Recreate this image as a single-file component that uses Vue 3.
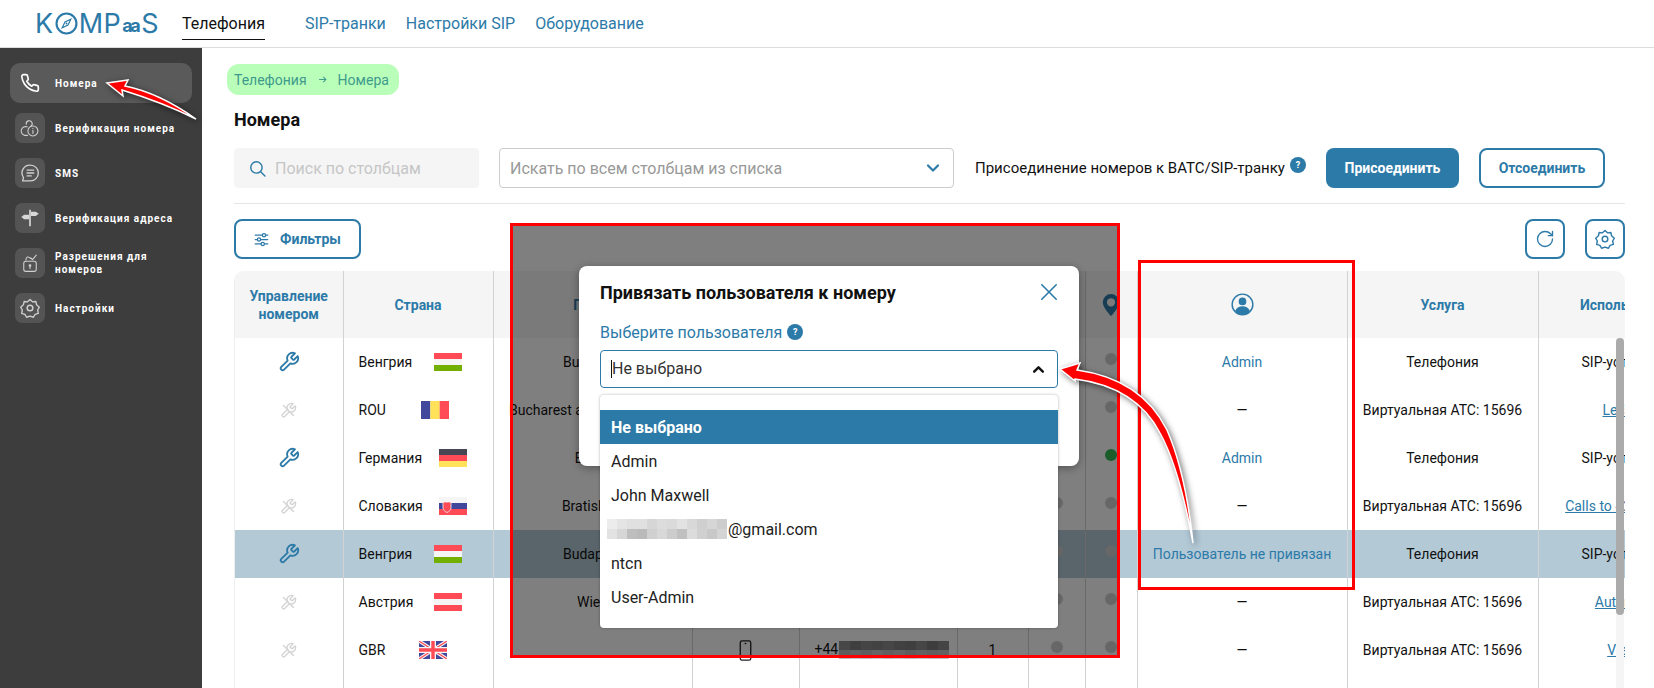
<template>
  <div class="page">
    <!-- Top bar -->
    <header class="topbar">
      <div class="logo">
        <span>K</span>
        <svg class="logo__o" viewBox="0 0 24 24" fill="none" stroke="currentColor">
          <circle cx="12" cy="12" r="10.4" stroke-width="2.2" />
          <path d="M16.5 7.5 13.6 13.6 7.5 16.5 10.4 10.4Z" stroke-width="1.2" />
          <circle cx="12" cy="12" r="1" fill="currentColor" stroke="none" />
        </svg>
        <span>MP</span>
        <span class="logo__aa">aa</span>
        <span>S</span>
      </div>
      <nav class="topnav">
        <a class="topnav__link topnav__link--active">Телефония</a>
        <a class="topnav__link">SIP-транки</a>
        <a class="topnav__link">Настройки SIP</a>
        <a class="topnav__link">Оборудование</a>
      </nav>
    </header>

    <div class="body">
      <!-- Sidebar -->
      <aside class="sidebar">
        <div v-for="(item, i) in sideItems" :key="item.label" class="side-item" :class="{ 'side-item--active': i === 0 }">
          <span class="side-item__icon">
            <svg v-if="item.icon === 'phone'" viewBox="0 0 24 24" fill="none" stroke="#fff" stroke-width="2" stroke-linejoin="round" stroke-linecap="round">
              <path d="M22 16.92v3a2 2 0 0 1-2.18 2 19.79 19.79 0 0 1-8.63-3.07 19.5 19.5 0 0 1-6-6 19.79 19.79 0 0 1-3.07-8.67A2 2 0 0 1 4.11 2h3a2 2 0 0 1 2 1.72 12.84 12.84 0 0 0 .7 2.81 2 2 0 0 1-.45 2.11L8.09 9.91a16 16 0 0 0 6 6l1.27-1.27a2 2 0 0 1 2.11-.45 12.84 12.84 0 0 0 2.81.7A2 2 0 0 1 22 16.92z" />
            </svg>
            <svg v-else-if="item.icon === 'verify'" viewBox="0 0 24 24" fill="none" stroke="#cfcfcf" stroke-width="1.3" stroke-linecap="round">
              <path d="M7.5 7.5a3.6 3.6 0 1 1 5.2 2.6" />
              <path d="M8.5 10.6a5.2 5.2 0 0 0-3.4 10.2h4" />
              <circle cx="15.5" cy="15.5" r="6" />
              <path d="M15.5 14.6v4M15.5 12.4v.2" />
            </svg>
            <svg v-else-if="item.icon === 'sms'" viewBox="0 0 24 24" fill="none" stroke="#cfcfcf" stroke-width="1.6" stroke-linecap="round" stroke-linejoin="round">
              <path d="M12.5 2.5a9.5 9.5 0 0 1 0 19H3.2l1-4a9.5 9.5 0 0 1 8.3-15Z" />
              <path d="M8.5 8.5h8M8.5 12h8M8.5 15.5h5" />
            </svg>
            <svg v-else-if="item.icon === 'sign'" viewBox="0 0 24 24" fill="#d8d8d8">
              <path d="M11 2h2v20h-2z" />
              <path d="M13 4.5h6l3.5 2.5-3.5 2.5h-6z" />
              <path d="M11 8h-6l-3.5 2.7 3.5 2.8h6z" />
            </svg>
            <svg v-else-if="item.icon === 'lock'" viewBox="0 0 24 24" fill="none" stroke="#cfcfcf" stroke-width="1.3" stroke-linecap="round" stroke-linejoin="round">
              <rect x="4.5" y="10" width="15" height="12" rx="2.5" />
              <path d="M7 8.5C7.5 4.5 10 3.5 12.5 6.5M13 6l2 2 4.5-5.5" />
              <circle cx="12" cy="15" r="1" fill="#cfcfcf" />
              <path d="M12 15.5v3" />
            </svg>
            <svg v-else viewBox="0 0 24 24" fill="none" stroke="#cfcfcf" stroke-width="1.6" stroke-linejoin="round">
              <path d="M12 1.8 15 4.6l4-.4.9 4 3.3 2.8-2 3.4.8 4-3.9 1.2-2 3.5-4.1-1.4-4.1 1.4-2-3.5-3.9-1.2.8-4-2-3.4 3.3-2.8.9-4 4 .4Z" />
              <circle cx="12" cy="12" r="3.4" stroke-width="1.8" />
            </svg>
          </span>
          <span class="side-item__label">{{ item.label }}</span>
        </div>
      </aside>

      <!-- Content -->
      <main class="main">
        <div class="crumbs">
          <span>Телефония</span>
          <svg class="crumbs__arrow" viewBox="0 0 12 12" fill="none" stroke="currentColor" stroke-width="1.4">
            <path d="M1.5 6h9M7 2.5 10.5 6 7 9.5" />
          </svg>
          <span>Номера</span>
        </div>
        <h1 class="title">Номера</h1>

        <div class="toolbar">
          <div class="search">
            <svg class="search__icon" viewBox="0 0 24 24" fill="none" stroke="#2c7aa8" stroke-width="2" stroke-linecap="round">
              <circle cx="10.5" cy="10.5" r="8" />
              <path d="m16.5 16.5 6 6" />
            </svg>
            <span>Поиск по столбцам</span>
          </div>
          <div class="column-select">
            <span>Искать по всем столбцам из списка</span>
            <svg class="column-select__chevron" viewBox="0 0 16 16" fill="none" stroke="#2c7aa8" stroke-width="2.2" stroke-linecap="round" stroke-linejoin="round">
              <path d="m3 5.5 5 5 5-5" />
            </svg>
          </div>
          <span class="toolbar__text">Присоединение номеров к ВАТС/SIP-транку</span>
          <span class="help help--raised">?</span>
          <button type="button" class="btn btn--primary">Присоединить</button>
          <button type="button" class="btn btn--outline">Отсоединить</button>
        </div>

        <div class="actions">
          <button type="button" class="btn-filter">
            <svg viewBox="0 0 24 24" fill="none" stroke="currentColor" stroke-width="2" stroke-linecap="round">
              <path d="M2 5h11M19 5h3M2 12h3M11 12h11M2 19h9M17 19h5" />
              <circle cx="16" cy="5" r="2.6" />
              <circle cx="8" cy="12" r="2.6" />
              <circle cx="14" cy="19" r="2.6" />
            </svg>
            Фильтры
          </button>
          <div class="actions__right">
            <button type="button" class="icon-btn" aria-label="Обновить">
              <svg viewBox="0 0 24 24" fill="none" stroke="currentColor" stroke-width="1.6" stroke-linecap="round" stroke-linejoin="round">
                <path d="M21 12a9 9 0 1 1-9-9c2.52 0 4.93 1 6.74 2.74L21 8" />
                <path d="M21 3v5h-5" />
              </svg>
            </button>
            <button type="button" class="icon-btn" aria-label="Настройки">
              <svg viewBox="0 0 24 24" fill="none" stroke="currentColor" stroke-width="1.7" stroke-linejoin="round">
                <path d="M12 1.8 15 4.6l4-.4.9 4 3.3 2.8-2 3.4.8 4-3.9 1.2-2 3.5-4.1-1.4-4.1 1.4-2-3.5-3.9-1.2.8-4-2-3.4 3.3-2.8.9-4 4 .4Z" />
                <circle cx="12" cy="12" r="3.4" />
              </svg>
            </button>
          </div>
        </div>

        <div class="table-wrap">
          <table class="grid">
            <colgroup>
              <col v-for="w in colWidths" :key="w.id" :style="{ width: w.px + 'px' }" />
            </colgroup>
            <thead>
              <tr>
                <th>Управление номером</th>
                <th>Страна</th>
                <th>Город</th>
                <th>Тип</th>
                <th>Номер</th>
                <th></th>
                <th></th>
                <th>
                  <svg class="pin" viewBox="0 0 24 24">
                    <path fill="#2c7aa8" fill-rule="evenodd" d="M12 0a9 9 0 0 0-9 9c0 6 9 15 9 15s9-9 9-15a9 9 0 0 0-9-9Zm0 4.5a4.5 4.5 0 1 1 0 9 4.5 4.5 0 0 1 0-9Z" />
                  </svg>
                </th>
                <th>
                  <svg class="user-icon" viewBox="0 0 24 24">
                    <circle cx="12" cy="12" r="10.8" fill="none" stroke="#2c7aa8" stroke-width="1.5" />
                    <circle cx="12" cy="8.8" r="4" fill="#2c7aa8" />
                    <path fill="#2c7aa8" d="M4.2 19c1.2-3.6 4.2-5.2 7.8-5.2s6.600 1.600 7.800 5.200A10.600 10.600 0 0 1 12 22.600 10.600 10.600 0 0 1 4.200 19Z" />
                  </svg>
                </th>
                <th>Услуга</th>
                <th>Использование</th>
              </tr>
            </thead>
            <tbody>
              <tr v-for="row in rows" :key="row.id" :class="{ 'row--selected': row.selected }">
                <td>
                  <svg class="wrench" :class="{ 'wrench--off': !row.manage }" viewBox="0 0 24 24" fill="none" stroke-linecap="round" stroke-linejoin="round">
                    <path d="M14.7 6.3a1 1 0 0 0 0 1.4l1.6 1.6a1 1 0 0 0 1.400 0l3.770-3.770a6 6 0 0 1-7.940 7.940l-6.910 6.910a2.120 2.120 0 0 1-3-3l6.910-6.910a6 6 0 0 1 7.940-7.940l-3.760 3.760z" />
                    <path v-if="!row.manage" d="M5 5l14 14" />
                  </svg>
                </td>
                <td class="cell-country">
                  <span>{{ row.country }}</span>
                  <svg class="flag" :style="{ marginLeft: row.flagGap + 'px' }" viewBox="0 0 28 18">
                    <template v-if="row.flag === 'gb'">
                      <rect width="28" height="18" fill="#41479b" />
                      <path d="M0 0 28 18M28 0 0 18" stroke="#f5f5f5" stroke-width="3.500" />
                      <path d="M0 0 28 18M28 0 0 18" stroke="#ff4b55" stroke-width="1.200" />
                      <path d="M14 0v18M0 9h28" stroke="#f5f5f5" stroke-width="6" />
                      <path d="M14 0v18M0 9h28" stroke="#ff4b55" stroke-width="3.400" />
                    </template>
                    <template v-else>
                      <rect
                        v-for="(color, s) in flags[row.flag].colors"
                        :key="s"
                        :x="flags[row.flag].vertical ? (s * 28) / 3 : 0"
                        :y="flags[row.flag].vertical ? 0 : s * 6"
                        :width="flags[row.flag].vertical ? 28 / 3 : 28"
                        :height="flags[row.flag].vertical ? 18 : 6"
                        :fill="color"
                      />
                      <path v-if="row.flag === 'sk'" d="M4 5h8v6c0 2-2 3.500-4 4.500-2-1-4-2.500-4-4.500Z" fill="#ff4b55" stroke="#f5f5f5" stroke-width="0.800" />
                    </template>
                  </svg>
                </td>
                <td class="cell-center">{{ row.city }}</td>
                <td class="cell-center">
                  <svg v-if="row.device" class="device" viewBox="0 0 16 24" fill="none" stroke="#222" stroke-width="1.500">
                    <rect x="2" y="1" width="12" height="22" rx="2" />
                    <path d="M7 4h2" />
                  </svg>
                </td>
                <td class="cell-number">
                  <template v-if="row.device">
                    <span>+44</span>
                    <span class="mosaic mosaic--number">
                      <i v-for="(c, m) in numberMosaic" :key="m" :style="{ background: c }"></i>
                    </span>
                  </template>
                </td>
                <td class="cell-center">{{ row.device ? '1' : '' }}</td>
                <td class="cell-center"><span class="dot"></span></td>
                <td class="cell-center"><span class="dot" :class="{ 'dot--on': row.online }"></span></td>
                <td class="cell-center" :class="{ 'cell-link': row.user !== '—' }">{{ row.user }}</td>
                <td class="cell-center">{{ row.service }}</td>
                <td class="cell-center">
                  <a v-if="row.usageLink" class="usage-link">{{ row.usage }}</a>
                  <template v-else>{{ row.usage }}</template>
                </td>
              </tr>
              <tr class="row--filler">
                <td v-for="w in colWidths" :key="w.id"></td>
              </tr>
            </tbody>
          </table>
          <div class="scrollbar"><div class="scrollbar__thumb"></div></div>
        </div>
      </main>
    </div>

    <!-- Dimmed part with the dialog, framed in the annotation -->
    <div class="dim">
      <div class="modal">
        <div class="modal__head">
          <span class="modal__title">Привязать пользователя к номеру</span>
          <svg class="modal__close" viewBox="0 0 20 20" fill="none" stroke="#2c7aa8" stroke-width="1.800" stroke-linecap="round">
            <path d="M2 2l16 16M18 2 2 18" />
          </svg>
        </div>
        <div class="modal__label">
          <span>Выберите пользователя</span>
          <span class="help">?</span>
        </div>
        <div class="user-select">
          <span class="user-select__value">Не выбрано</span>
          <svg class="user-select__chevron" viewBox="0 0 12 12" fill="none" stroke="#111" stroke-width="2.200" stroke-linecap="round" stroke-linejoin="round">
            <path d="m2 8 4-4 4 4" />
          </svg>
        </div>
        <ul class="options">
          <li class="options__item options__item--selected">Не выбрано</li>
          <li class="options__item">Admin</li>
          <li class="options__item">John Maxwell</li>
          <li class="options__item options__item--mail">
            <span class="mosaic mosaic--mail">
              <i v-for="(c, m) in mailMosaic" :key="m" :style="{ background: c }"></i>
            </span>
            <span>@gmail.com</span>
          </li>
          <li class="options__item">ntcn</li>
          <li class="options__item">User-Admin</li>
        </ul>
      </div>
    </div>

    <div class="user-frame"></div>

    <!-- Hand-drawn annotation arrows -->
    <svg class="arrows" viewBox="0 0 1654 688">
      <path
        class="arrow"
        d="M107 83 128 80 125 86C150 91 172 102 196 119 170 106 148 98 122 90L123 96Z"
      />
      <path
        class="arrow"
        d="M1060 369 1080 363 1077 370C1120 376 1150 396 1167 430 1181 462 1189 505 1193 543 1186 505 1176 462 1160 433 1143 400 1114 384 1075 379L1075 381Z"
      />
    </svg>
  </div>
</template>

<script setup>
const sideItems = [
  { label: 'Номера', icon: 'phone' },
  { label: 'Верификация номера', icon: 'verify' },
  { label: 'SMS', icon: 'sms' },
  { label: 'Верификация адреса', icon: 'sign' },
  { label: 'Разрешения для номеров', icon: 'lock' },
  { label: 'Настройки', icon: 'gear' }
]

const colWidths = [108, 150, 199, 107, 158, 71, 57, 52, 210, 191, 186].map((px, id) => ({ id, px }))

const flags = {
  hu: { colors: ['#ff4b55', '#f5f5f5', '#73af00'] },
  ro: { colors: ['#41479b', '#ffe15a', '#ff4b55'], vertical: true },
  de: { colors: ['#464655', '#ff4b55', '#ffe15a'] },
  sk: { colors: ['#f5f5f5', '#41479b', '#ff4b55'] },
  at: { colors: ['#ff4b55', '#f5f5f5', '#ff4b55'] }
}

const VATS = 'Виртуальная АТС: 15696'

const rows = [
  { id: 1, manage: true, country: 'Венгрия', flag: 'hu', flagGap: 22, city: 'Budapest', user: 'Admin', service: 'Телефония', usage: 'SIP-устройство' },
  { id: 2, manage: false, country: 'ROU', flag: 'ro', flagGap: 35, city: 'Bucharest and Ilfov County', user: '—', service: VATS, usage: "Let's Talk", usageLink: true },
  { id: 3, manage: true, country: 'Германия', flag: 'de', flagGap: 17, city: 'Berlin', online: true, user: 'Admin', service: 'Телефония', usage: 'SIP-устройство' },
  { id: 4, manage: false, country: 'Словакия', flag: 'sk', flagGap: 16, city: 'Bratislava', user: '—', service: VATS, usage: 'Calls to 421 numbers', usageLink: true },
  { id: 5, manage: true, country: 'Венгрия', flag: 'hu', flagGap: 22, city: 'Budapest', selected: true, user: 'Пользователь не привязан', service: 'Телефония', usage: 'SIP-устройство' },
  { id: 6, manage: false, country: 'Австрия', flag: 'at', flagGap: 21, city: 'Wien', user: '—', service: VATS, usage: 'Automation', usageLink: true },
  { id: 7, manage: false, country: 'GBR', flag: 'gb', flagGap: 34, city: '', device: true, user: '—', service: VATS, usage: 'View all', usageLink: true }
]

const numberMosaic = [
  '#8f8f8f', '#7f7f7f', '#8a8a8a', '#858585', '#8c8c8c', '#828282', '#7f7f7f', '#8c8c8c', '#7a7a7a', '#8a8a8a',
  '#b9b9b9', '#c4c4c4', '#bdbdbd', '#c8c8c8', '#bebebe', '#c6c6c6', '#bbbbbb', '#c4c4c4', '#bcbcbc', '#c0c0c0'
]

const mailMosaic = [
  '#ececec', '#e4e4e4', '#e0e0e0', '#e0e0e0', '#d6d6d6', '#dcdcdc', '#dadada', '#e2e2e2', '#d8d8d8', '#cfcfcf', '#d6d6d6', '#cdcdcd',
  '#e2e2e2', '#d6d6d6', '#bebebe', '#bababa', '#d0d0d0', '#d8d8d8', '#cccccc', '#c0c0c0', '#dcdcdc', '#d0d0d0', '#c8c8c8', '#d4d4d4'
]
</script>

<style scoped>
.page {
  position: relative;
  width: 1654px;
  height: 688px;
  overflow: hidden;
  display: flex;
  flex-direction: column;
  background: #fff;
  color: #111;
  font-family: Roboto, 'Liberation Sans', sans-serif;
  font-size: 14px;
}

/* Top bar */
.topbar {
  height: 48px;
  flex-shrink: 0;
  display: flex;
  align-items: center;
  box-sizing: border-box;
  border-bottom: 1px solid #ddd;
  padding-left: 35px;
}

.logo {
  width: 147px;
  display: flex;
  align-items: center;
  color: #2c7aa8;
  font-family: Inter, sans-serif;
  font-size: 27px;
  line-height: 1;
  letter-spacing: 0.5px;
  margin-top: -1px;
}

.logo__o {
  width: 23px;
  height: 23px;
  margin: 0 1px 0 1px;
}

.logo__aa {
  font-size: 18px;
  font-weight: 700;
  letter-spacing: -2.5px;
  margin: 6px 3px 0 1px;
}

.topnav {
  display: flex;
  gap: 20px;
}

.topnav__link {
  color: #2c7aa8;
  font-size: 16px;
  line-height: 30px;
  margin-top: 1px;
}

.topnav__link--active {
  color: #111;
  margin-right: 20px;
  border-bottom: 1px solid #111;
}

.body {
  flex: 1;
  display: flex;
  min-height: 0;
}

/* Sidebar */
.sidebar {
  width: 202px;
  flex-shrink: 0;
  box-sizing: border-box;
  padding-top: 15px;
  background: #3d3d3d;
}

.side-item {
  height: 40px;
  box-sizing: border-box;
  margin: 0 10px 5px;
  padding: 5px;
  border-radius: 10px;
  display: flex;
  align-items: center;
  gap: 10px;
}

.side-item--active {
  background: #5a5a5a;
}

.side-item__icon {
  width: 30px;
  height: 30px;
  flex-shrink: 0;
  display: flex;
  align-items: center;
  justify-content: center;
  border-radius: 7px;
  background: #545454;
}

.side-item--active .side-item__icon {
  background: transparent;
}

.side-item__icon svg {
  width: 20px;
  height: 20px;
}

.side-item__label {
  color: #fff;
  font-size: 10px;
  font-weight: 700;
  letter-spacing: 1px;
  line-height: 13px;
}

/* Main */
.main {
  flex: 1;
  min-width: 0;
  box-sizing: border-box;
  padding: 16px 29px 0 32px;
  display: flex;
  flex-direction: column;
}

.crumbs {
  align-self: flex-start;
  height: 31px;
  margin-left: -7px;
  padding: 0 10px 0 7px;
  display: flex;
  align-items: center;
  gap: 11px;
  border-radius: 12px;
  background: #b9ffb9;
  color: #3f9a8c;
}

.crumbs__arrow {
  width: 9px;
  height: 9px;
}

.title {
  margin: 15px 0 0;
  font-size: 18px;
  font-weight: 700;
  line-height: 20px;
  color: #111;
}

.toolbar {
  margin-top: 18px;
  display: flex;
  align-items: center;
  height: 40px;
  padding-bottom: 15px;
  box-sizing: content-box;
  border-bottom: 1px solid #e6e6e6;
}

.search {
  width: 245px;
  height: 40px;
  box-sizing: border-box;
  flex-shrink: 0;
  display: flex;
  align-items: center;
  gap: 9px;
  padding-left: 15px;
  border-radius: 4px;
  background: #f5f5f5;
  color: #c6c6c6;
  font-size: 16px;
}

.search__icon {
  width: 17px;
  height: 17px;
}

.column-select {
  width: 455px;
  height: 40px;
  margin-left: 20px;
  box-sizing: border-box;
  flex-shrink: 0;
  display: flex;
  align-items: center;
  justify-content: space-between;
  padding: 0 12px 0 10px;
  border: 1px solid #ccc;
  border-radius: 4px;
  color: #999;
  font-size: 16px;
}

.column-select__chevron {
  width: 16px;
  height: 16px;
}

.toolbar__text {
  margin-left: 21px;
  font-size: 15px;
  white-space: nowrap;
}

.help {
  width: 16px;
  height: 16px;
  border-radius: 50%;
  display: inline-flex;
  align-items: center;
  justify-content: center;
  background: #2c7aa8;
  color: #fff;
  font-size: 9px;
  font-weight: 700;
}

.help--raised {
  margin: -6px 0 0 5px;
}

.btn {
  height: 40px;
  box-sizing: border-box;
  border-radius: 8px;
  font-family: inherit;
  font-size: 14px;
  font-weight: 700;
}

.btn--primary {
  width: 133px;
  margin-left: 20px;
  border: 0;
  background: #2c7aa8;
  color: #fff;
}

.btn--outline {
  width: 126px;
  margin-left: 20px;
  border: 2px solid #2c7aa8;
  background: #fff;
  color: #2c7aa8;
}

.actions {
  margin-top: 15px;
  height: 40px;
  flex-shrink: 0;
  display: flex;
  justify-content: space-between;
}

.btn-filter {
  width: 127px;
  height: 40px;
  box-sizing: border-box;
  display: flex;
  align-items: center;
  justify-content: center;
  gap: 11px;
  border: 2px solid #2c7aa8;
  border-radius: 8px;
  background: #fff;
  color: #2c7aa8;
  font-family: inherit;
  font-size: 14px;
  font-weight: 700;
}

.btn-filter svg {
  width: 15px;
  height: 15px;
}

.actions__right {
  display: flex;
  gap: 20px;
}

.icon-btn {
  width: 40px;
  height: 40px;
  padding: 0;
  box-sizing: border-box;
  display: flex;
  align-items: center;
  justify-content: center;
  border: 2px solid #2c7aa8;
  border-radius: 8px;
  background: #fff;
  color: #2c7aa8;
}

.icon-btn svg {
  width: 20px;
  height: 20px;
}

/* Table */
.table-wrap {
  position: relative;
  margin-top: 12px;
  flex: 1;
  min-height: 0;
  overflow: hidden;
  border-radius: 10px 10px 0 0;
  border-left: 1px solid #eee;
}

.grid {
  width: 1489px;
  table-layout: fixed;
  border-collapse: collapse;
}

.grid th {
  height: 67px;
  padding: 0 8px;
  background: #f5f5f5;
  color: #2c7aa8;
  font-size: 14px;
  font-weight: 700;
  line-height: 18px;
  text-align: center;
  white-space: normal;
  border-right: 1px solid #d2d2d2;
}

.grid td {
  height: 48px;
  padding: 0;
  border-right: 1px solid #d2d2d2;
  text-align: center;
  white-space: nowrap;
  overflow: visible;
}

.grid th:last-child,
.grid td:last-child {
  border-right: 0;
}

.row--selected td {
  background: #b3c9d6;
}

.row--filler td {
  height: 20px;
}

.pin {
  width: 22px;
  height: 22px;
  display: block;
  margin: 0 auto;
}

.user-icon {
  width: 23px;
  height: 23px;
  display: block;
  margin: 0 auto;
}

.wrench {
  width: 22px;
  height: 22px;
  vertical-align: middle;
  stroke: #2c7aa8;
  stroke-width: 2;
}

.wrench--off {
  width: 17px;
  height: 17px;
  stroke: #d4d4d4;
}

.grid .cell-country {
  text-align: left;
  padding-left: 15px;
}

.cell-country span,
.flag {
  vertical-align: middle;
}

.flag {
  width: 28px;
  height: 18px;
}

.device {
  width: 15px;
  height: 21px;
  vertical-align: middle;
}

.grid .cell-number {
  text-align: left;
  padding-left: 15px;
}

.cell-link {
  color: #2c7aa8;
}

.cell-center {
  overflow: hidden;
}

.dot {
  display: block;
  width: 12px;
  height: 12px;
  margin: -6px auto 0;
  border-radius: 50%;
  background: #cecece;
}

.dot--on {
  background: #34b854;
}

.usage-link {
  color: #2c7aa8;
  text-decoration: underline;
}

.mosaic {
  display: inline-grid;
}

.mosaic i {
  display: block;
}

.mosaic--number {
  grid-template-columns: repeat(10, 11px);
  grid-auto-rows: 9px;
  vertical-align: middle;
  margin-left: 1px;
}

.scrollbar {
  position: absolute;
  top: 67px;
  right: 1px;
  bottom: 0;
  width: 8px;
  background: #f5f5f5;
}

.scrollbar__thumb {
  height: 277px;
  border-radius: 4px;
  background: #ababab;
}

/* Dimmed frame and dialog */
.dim {
  position: absolute;
  left: 510px;
  top: 223px;
  width: 610px;
  height: 435px;
  box-sizing: border-box;
  border: 3px solid #f00;
  background: rgba(0, 0, 0, 0.5);
}

.modal {
  position: absolute;
  left: 66px;
  top: 40px;
  width: 500px;
  height: 200px;
  box-sizing: border-box;
  padding: 16px 21px 0;
  border-radius: 8px;
  background: #fff;
  box-shadow: 0 2px 8px rgba(0, 0, 0, 0.35);
}

.modal__head {
  display: flex;
  justify-content: space-between;
  align-items: center;
  height: 20px;
}

.modal__title {
  font-size: 18px;
  font-weight: 700;
  color: #111;
}

.modal__close {
  width: 18px;
  height: 18px;
}

.modal__label {
  margin-top: 20px;
  display: flex;
  align-items: center;
  gap: 5px;
  height: 20px;
  color: #2c7aa8;
  font-size: 16px;
}

.user-select {
  margin-top: 8px;
  width: 458px;
  height: 38px;
  box-sizing: border-box;
  display: flex;
  align-items: center;
  justify-content: space-between;
  padding: 0 12px 0 10px;
  border: 1px solid #2c7aa8;
  border-radius: 4px;
  font-size: 16px;
  color: #333;
}

.user-select__value {
  border-left: 1px solid #111;
  line-height: 18px;
}

.user-select__chevron {
  width: 13px;
  height: 13px;
}

.options {
  list-style: none;
  margin: 7px 0 0;
  padding: 15px 0 14px;
  width: 458px;
  position: relative;
  z-index: 1;
  border-radius: 4px;
  background: #fff;
  box-shadow: 0 0 3px rgba(0, 0, 0, 0.3);
}

.options__item {
  height: 34px;
  padding-left: 11px;
  display: flex;
  align-items: center;
  font-size: 16px;
  color: #222;
}

.options__item--selected {
  background: #2c7aa8;
  color: #fff;
  font-weight: 700;
}

.options__item--mail {
  padding-left: 7px;
}

.mosaic--mail {
  grid-template-columns: repeat(12, 10px);
  grid-auto-rows: 10px;
  margin-right: 1px;
}

.user-frame {
  position: absolute;
  left: 1138px;
  top: 260px;
  width: 217px;
  height: 330px;
  box-sizing: border-box;
  border: 3px solid #f00;
}

.arrows {
  position: absolute;
  inset: 0;
  width: 1654px;
  height: 688px;
  pointer-events: none;
}

.arrow {
  fill: #f00;
  stroke: #fff;
  stroke-width: 1.500;
  stroke-linejoin: miter;
  filter: drop-shadow(2px 2px 3px rgba(0, 0, 0, 0.55));
}
</style>

<style>
html,
body {
  margin: 0;
  overflow: hidden;
}
</style>
